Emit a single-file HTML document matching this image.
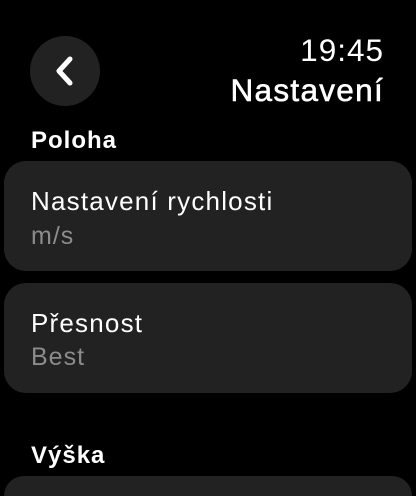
<!DOCTYPE html>
<html><head><meta charset="utf-8"><style>
html,body{margin:0;width:416px;height:496px;overflow:hidden}
body{background:#000;font-family:"Liberation Sans",sans-serif;color:#fff;position:relative}
.a{position:absolute;white-space:nowrap}
.circ{position:absolute;left:30px;top:36px;width:70px;height:70px;border-radius:50%;background:#222}
.card{position:absolute;left:4px;width:408px;height:110px;border-radius:22px;background:#222}
.t{font-size:26px;letter-spacing:1.2px}
.s{font-size:25px;color:#8c8c8c;letter-spacing:1px}
.h{font-size:24px;font-weight:bold;letter-spacing:1px}
</style></head><body>
<div class="circ"><svg width="70" height="70" viewBox="0 0 70 70"><path d="M40 23 L29 35 L40 47" fill="none" stroke="#fff" stroke-width="5" stroke-linecap="round" stroke-linejoin="round"/></svg></div>
<div class="a" style="right:32px;top:32px;font-size:31.5px;letter-spacing:1px">19:45</div>
<div class="a" style="right:32px;top:72px;font-size:31.5px;letter-spacing:1.3px;-webkit-text-stroke:0.6px #fff">Nastavení</div>
<div class="a h" style="left:31px;top:127px">Poloha</div>
<div class="card" style="top:161px"></div>
<div class="a t" style="left:31px;top:186px">Nastavení rychlosti</div>
<div class="a s" style="left:31px;top:222px">m/s</div>
<div class="card" style="top:283px"></div>
<div class="a t" style="left:31px;top:308px">Přesnost</div>
<div class="a s" style="left:31px;top:343px">Best</div>
<div class="a h" style="left:31px;top:442px">Výška</div>
<div class="card" style="top:476px;height:20px;border-radius:22px 22px 0 0"></div>
</body></html>
